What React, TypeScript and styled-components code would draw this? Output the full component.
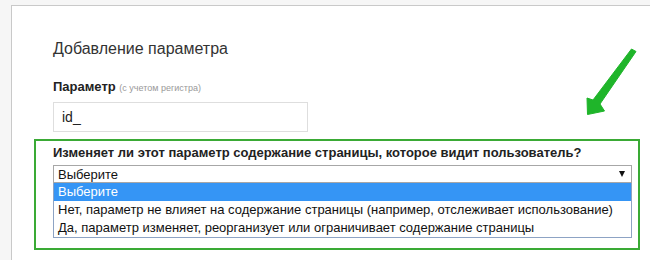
import React from 'react';
import styled, { createGlobalStyle } from 'styled-components';

const GlobalStyle = createGlobalStyle`
  html, body {
    margin: 0;
    padding: 0;
    background: #f6f6f6;
    font-family: 'Liberation Sans', Arial, sans-serif;
  }
`;

const options = [
  'Выберите',
  'Нет, параметр не влияет на содержание страницы (например, отслеживает использование)',
  'Да, параметр изменяет, реорганизует или ограничивает содержание страницы',
];

const App: React.FC = () => {
  return (
    <>
      <GlobalStyle />
      <Page>
        <Card>
          <Section>
            <Title>Добавление параметра</Title>
            <Label>
              Параметр <Hint>(с учетом регистра)</Hint>
            </Label>
            <Input>id_</Input>
          </Section>
          <Highlight>
            <Question>
              Изменяет ли этот параметр содержание страницы, которое видит пользователь?
            </Question>
            <Select>
              <span>Выберите</span>
              <Caret />
            </Select>
            <List>
              {options.map((o, i) => (
                <Option key={i} active={i === 0}>
                  {o}
                </Option>
              ))}
            </List>
          </Highlight>
          <Arrow width="60" height="75" viewBox="0 0 60 75">
            <path
              d="M46.5 1 L51 3.5 L15 56 L19.5 63 L2.5 66.5 L2 50 L8 52 Z"
              fill="#1fb52a"
              stroke="#1fb52a"
              strokeWidth="1"
              strokeLinejoin="round"
            />
          </Arrow>
        </Card>
      </Page>
    </>
  );
};

export default App;

const Page = styled.div`
  width: 650px;
  height: 260px;
  overflow: hidden;
  padding: 5px 0 0 11px;
  box-sizing: border-box;
`;

const Card = styled.div`
  position: relative;
  height: 300px;
  background: #fff;
  border-top: 1px solid #c9c9c9;
  border-left: 1px solid #c9c9c9;
  padding: 0 0 0 22px;
`;

const Section = styled.div`
  padding: 33px 0 7px 19px;
`;

const Title = styled.div`
  font-size: 16px;
  line-height: 20px;
  color: #333;
`;

const Label = styled.div`
  margin-top: 20px;
  font-size: 13px;
  line-height: 16px;
  font-weight: bold;
  color: #222;
`;

const Hint = styled.span`
  font-size: 9px;
  font-weight: normal;
  color: #999;
`;

const Input = styled.div`
  margin-top: 6px;
  width: 255px;
  height: 30px;
  box-sizing: border-box;
  border: 1px solid #dedede;
  padding: 0 8px;
  font-size: 14px;
  line-height: 28px;
  color: #222;
`;

const Highlight = styled.div`
  width: 606px;
  box-sizing: border-box;
  border: 2px solid #3aaa35;
  padding: 4px 6px 10px 17px;
`;

const Question = styled.div`
  font-size: 13px;
  line-height: 16px;
  font-weight: bold;
  color: #222;
`;

const Select = styled.div`
  margin-top: 4px;
  height: 18px;
  box-sizing: border-box;
  border: 1px solid #a7a7a7;
  display: flex;
  align-items: center;
  justify-content: space-between;
  padding: 0 6px 0 4px;
  font-size: 13px;
  color: #111;
`;

const Caret = styled.span`
  width: 0;
  height: 0;
  border-left: 3.5px solid transparent;
  border-right: 3.5px solid transparent;
  border-top: 6px solid #111;
`;

const List = styled.div`
  border: 1px solid #8da3c4;
  border-top: none;
`;

const Option = styled.div<{ active?: boolean }>`
  height: 18px;
  line-height: 18px;
  padding: 0 4px;
  font-size: 13px;
  white-space: nowrap;
  color: ${p => (p.active ? '#fff' : '#111')};
  background: ${p => (p.active ? '#3595f5' : '#fff')};
`;

const Arrow = styled.svg`
  position: absolute;
  left: 573px;
  top: 42px;
`;
